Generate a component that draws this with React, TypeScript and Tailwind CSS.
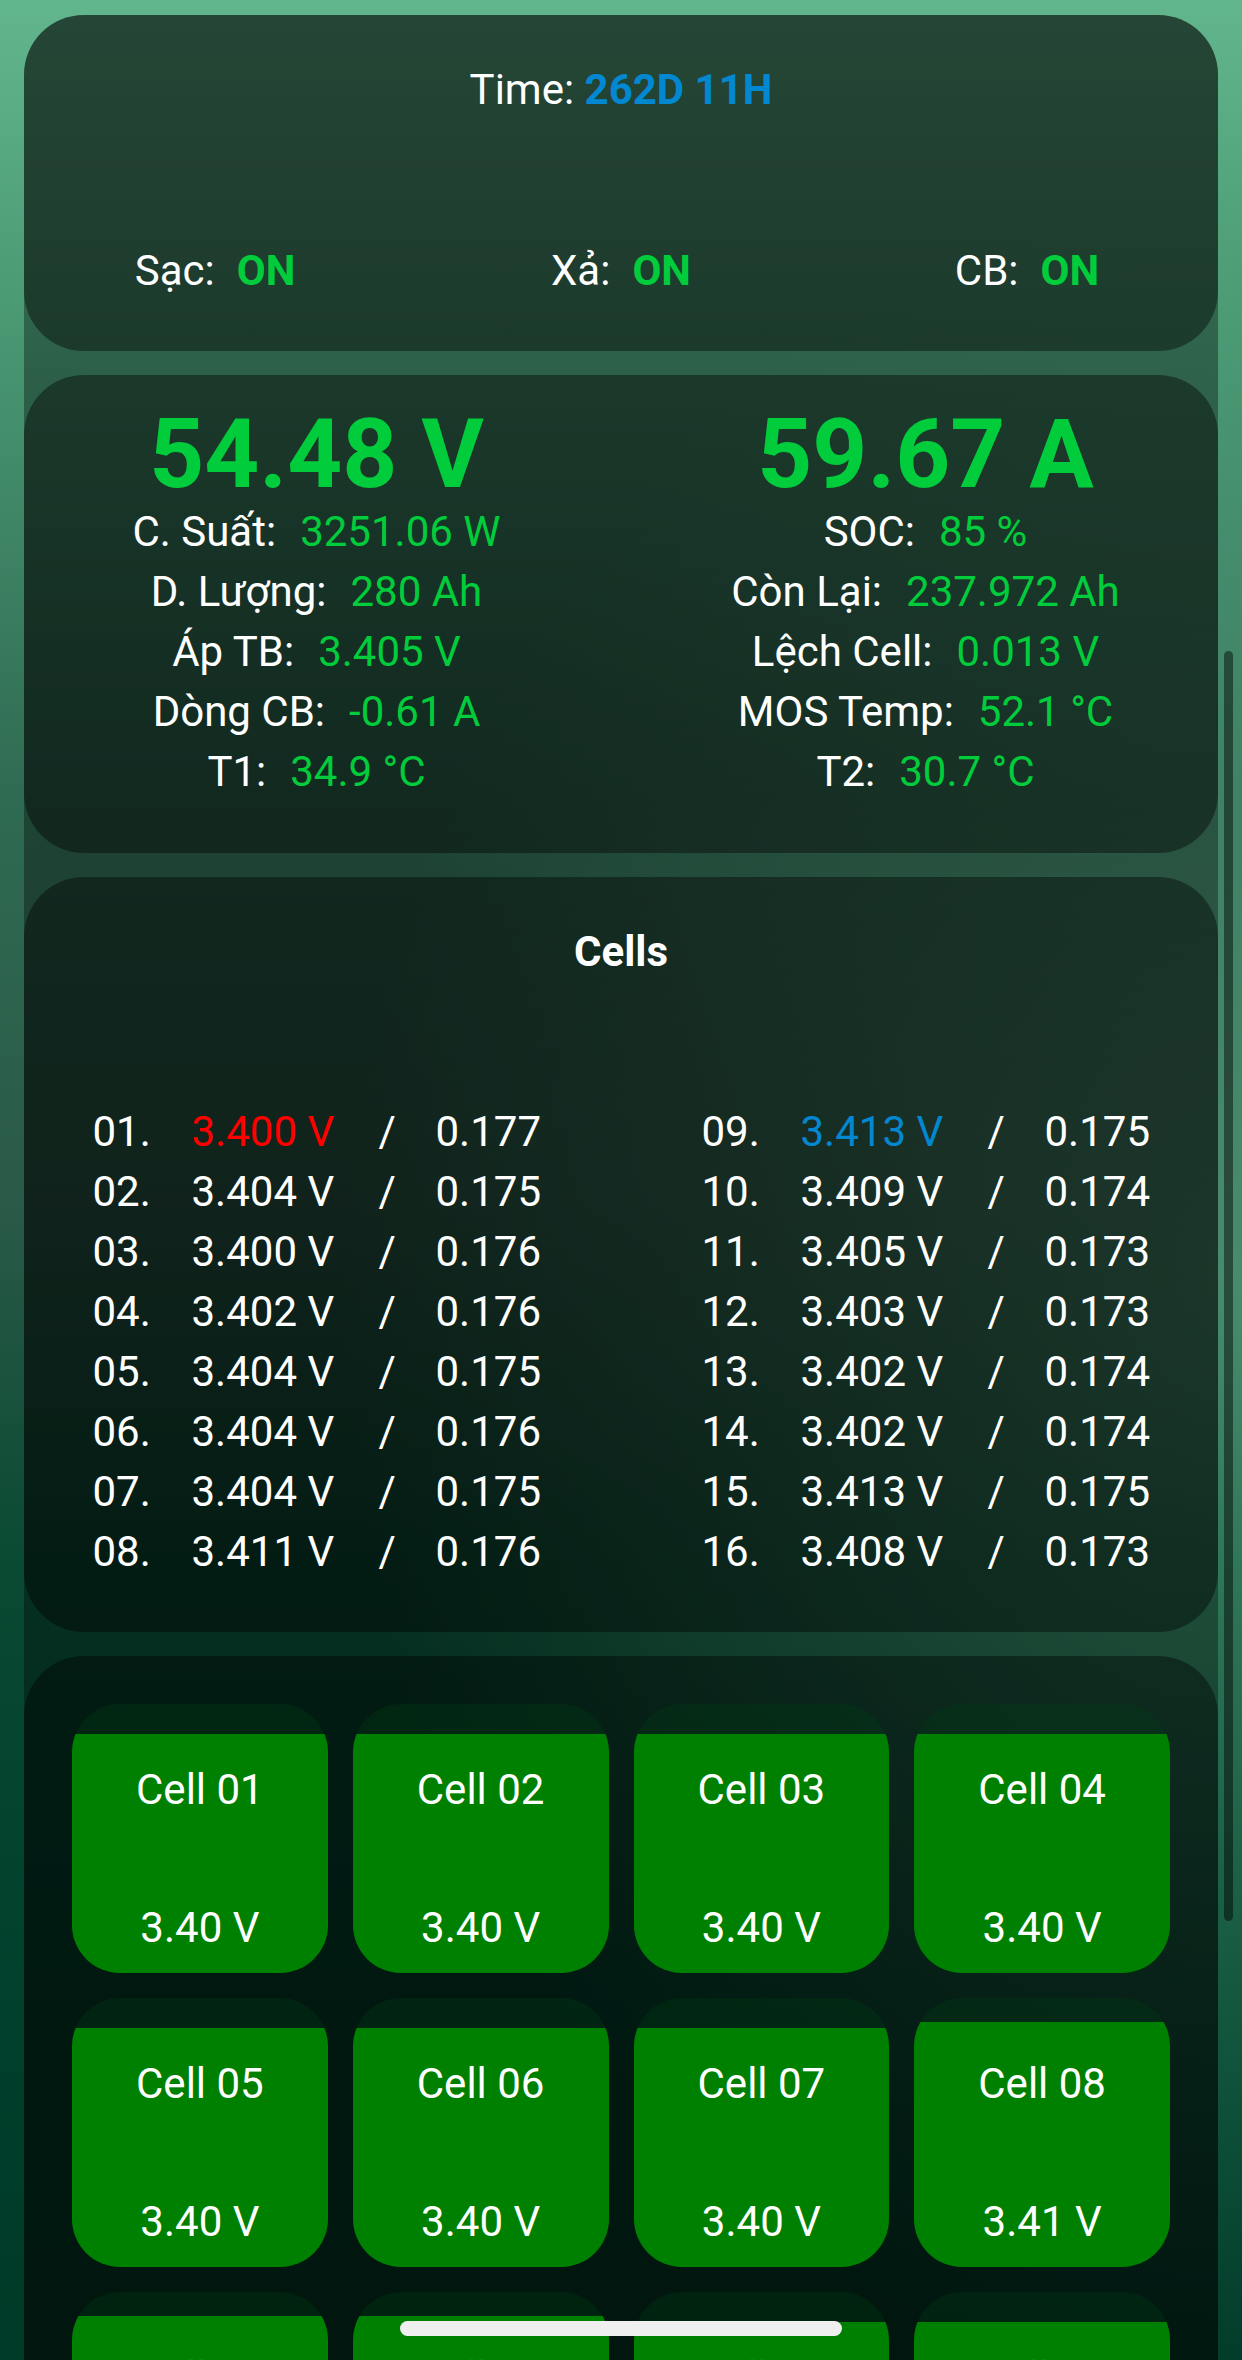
import React from "react";

interface Cell {
    no: string;
    volt: number;
    res: string;
}

const cells: Cell[] = [
    { no: "01", volt: 3.4, res: "0.177" },
    { no: "02", volt: 3.404, res: "0.175" },
    { no: "03", volt: 3.4, res: "0.176" },
    { no: "04", volt: 3.402, res: "0.176" },
    { no: "05", volt: 3.404, res: "0.175" },
    { no: "06", volt: 3.404, res: "0.176" },
    { no: "07", volt: 3.404, res: "0.175" },
    { no: "08", volt: 3.411, res: "0.176" },
    { no: "09", volt: 3.413, res: "0.175" },
    { no: "10", volt: 3.409, res: "0.174" },
    { no: "11", volt: 3.405, res: "0.173" },
    { no: "12", volt: 3.403, res: "0.173" },
    { no: "13", volt: 3.402, res: "0.174" },
    { no: "14", volt: 3.402, res: "0.174" },
    { no: "15", volt: 3.413, res: "0.175" },
    { no: "16", volt: 3.408, res: "0.173" },
];

const leftStats = [
    ["C. Suất:", "3251.06 W"],
    ["D. Lượng:", "280 Ah"],
    ["Áp TB:", "3.405 V"],
    ["Dòng CB:", "-0.61 A"],
    ["T1:", "34.9 °C"],
];

const rightStats = [
    ["SOC:", "85 %"],
    ["Còn Lại:", "237.972 Ah"],
    ["Lệch Cell:", "0.013 V"],
    ["MOS Temp:", "52.1 °C"],
    ["T2:", "30.7 °C"],
];

// min / max cell get highlighted (first match only)
const minIdx = cells.findIndex(c => c.volt === Math.min(...cells.map(x => x.volt)));
const maxIdx = cells.findIndex(c => c.volt === Math.max(...cells.map(x => x.volt)));

function StatRow({ label, value }: { label: string; value: string }) {
    return (
        <div className="flex justify-center whitespace-nowrap">
            <span>{label}</span>
            <span className="ml-[24px] text-[#00cc3c]">{value}</span>
        </div>
    );
}

function CellLine({ cell, idx }: { cell: Cell; idx: number }) {
    let color = "text-white";
    if (idx === minIdx) color = "text-[#ff0000]";
    if (idx === maxIdx) color = "text-[#0288d1]";
    return (
        <div className="flex whitespace-nowrap">
            <span className="w-[99px]">{cell.no}.</span>
            <span className={`w-[187px] ${color}`}>{cell.volt.toFixed(3)} V</span>
            <span className="w-[57px]">/</span>
            <span className="w-[105px]">{cell.res}</span>
        </div>
    );
}

function CellTile({ cell }: { cell: Cell }) {
    const shown = cell.volt.toFixed(2);
    const level = Math.min(1, Math.max(0, (parseFloat(shown) - 3.0) / 0.45));
    return (
        <div className="relative h-[269px] overflow-hidden rounded-[48px] bg-[#003c14]/35">
            <div className="absolute inset-x-0 bottom-0 bg-[#008000]" style={{ height: `${level * 100}%` }} />
            <div className="relative flex flex-col items-center pt-[56px]">
                <span>Cell {cell.no}</span>
                <span className="mt-[78px]">{shown} V</span>
            </div>
        </div>
    );
}

export default function App() {
    return (
        <div className="relative h-[2360px] w-[1242px] overflow-hidden bg-[radial-gradient(900px_1100px_at_100%_55%,rgba(108,192,150,0.5),transparent),linear-gradient(180deg,#62b68d_0%,#4a9a74_13%,#2f6a52_34%,#2a5a48_51%,#0a4a33_66%,#00402c_85%,#003a28_100%)] font-['Roboto',sans-serif] text-[42px] leading-[60px] text-white">
            <div className="mx-[24px] mt-[15px] flex flex-col gap-[24px] rounded-t-[60px] bg-black/35">
                {/* Time + switches */}
                <div className="rounded-[60px] bg-black/40 pt-[45px] pb-[50px]">
                    <div className="text-center">
                        Time: <span className="font-bold text-[#0288d1]">262D 11H</span>
                    </div>
                    <div className="mt-[121px] grid grid-cols-3 gap-x-[24px]">
                        {["Sạc:", "Xả:", "CB:"].map(l => (
                            <div key={l} className="flex justify-center">
                                <span>{l}</span>
                                <span className="ml-[22px] font-bold text-[#00cc3c]">ON</span>
                            </div>
                        ))}
                    </div>
                </div>

                {/* Pack summary */}
                <div className="grid grid-cols-2 gap-x-[24px] rounded-[60px] bg-black/40 pt-[31px] pb-[51px]">
                    <div className="flex flex-col items-center">
                        <div className="text-[96px] leading-[96px] font-bold text-[#00cc3c]">54.48 V</div>
                        {leftStats.map(([l, v]) => <StatRow key={l} label={l} value={v} />)}
                    </div>
                    <div className="flex flex-col items-center">
                        <div className="text-[96px] leading-[96px] font-bold text-[#00cc3c]">59.67 A</div>
                        {rightStats.map(([l, v]) => <StatRow key={l} label={l} value={v} />)}
                    </div>
                </div>

                {/* Cell list */}
                <div className="rounded-[60px] bg-black/40 pt-[45px] pb-[50px]">
                    <div className="text-center font-bold">Cells</div>
                    <div className="mt-[120px] grid grid-cols-2 gap-x-[24px]">
                        <div className="flex flex-col items-center">
                            {cells.slice(0, 8).map((c, i) => <CellLine key={c.no} cell={c} idx={i} />)}
                        </div>
                        <div className="flex flex-col items-center">
                            {cells.slice(8).map((c, i) => <CellLine key={c.no} cell={c} idx={i + 8} />)}
                        </div>
                    </div>
                </div>

                {/* Cell tiles */}
                <div className="grid grid-cols-4 gap-[25px] rounded-[60px] bg-black/40 p-[48px]">
                    {cells.map(c => <CellTile key={c.no} cell={c} />)}
                </div>
            </div>

            {/* scroll indicator */}
            <div className="absolute left-[1224px] top-[651px] h-[1270px] w-[9px] rounded-full bg-black/45" />
            {/* gesture bar */}
            <div className="absolute left-[400px] top-[2321px] h-[15px] w-[442px] rounded-full bg-[#efefef]" />
        </div>
    );
}
